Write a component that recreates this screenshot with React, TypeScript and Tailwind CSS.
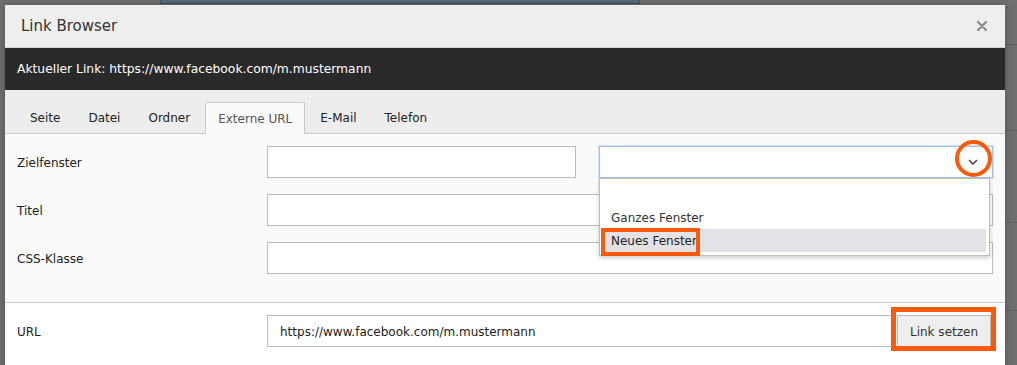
import React from "react";

const TABS = ["Seite", "Datei", "Ordner", "Externe URL", "E-Mail", "Telefon"];
const ACTIVE = "Externe URL";

function Field({ className = "" }: { className?: string }) {
  return <div className={`h-8 border border-[#bbbbbb] bg-white ${className}`} />;
}

function Row({ label, children }: { label: string; children: React.ReactNode }) {
  return (
    <div className="flex items-center">
      <div className="w-[250px] shrink-0 pt-px">{label}</div>
      <div className="flex flex-1 items-center">{children}</div>
    </div>
  );
}

export default function App() {
  return (
    <div className="relative h-[365px] w-[1017px] overflow-hidden bg-[#6f6f6f] font-['DejaVu_Sans',Verdana,sans-serif] text-[12px] text-[#222]">
      {/* page behind the backdrop */}
      <div className="absolute left-[160px] top-0 h-[4px] w-[480px] border-x border-b border-[#3e5266] bg-[#5b6b7b]" />
      <div className="absolute right-0 top-[44px] h-px w-[12px] bg-[#5e5e5e]" />
      <div className="absolute right-0 top-[130px] h-px w-[12px] bg-[#5e5e5e]" />
      <div className="absolute right-0 top-[222px] h-px w-[12px] bg-[#5e5e5e]" />
      <div className="absolute right-0 top-[310px] h-px w-[12px] bg-[#5e5e5e]" />

      {/* modal */}
      <div className="relative ml-[5px] mt-[5px] w-[1000px] bg-[#fafafa] shadow-[0_0_8px_rgba(0,0,0,0.25)]">
        <div className="flex h-[43px] items-center justify-between border-b border-[#d5d5d5] bg-[#eeeeee] pl-4 pr-[18px]">
          <span className="text-[15px] text-[#333]">Link Browser</span>
          <svg width="10" height="10" viewBox="0 0 10 10">
            <path d="M1 1 L9 9 M9 1 L1 9" stroke="#8a8a8a" strokeWidth="2.2" strokeLinecap="round" />
          </svg>
        </div>

        <div className="flex h-[42px] items-center bg-[#292929] px-3 pt-px text-[12.3px] text-white">
          Aktueller Link: https://www.facebook.com/m.mustermann
        </div>

        <div className="flex gap-[2px] border-b border-[#c8c8c8] bg-[#ededed] px-3 pt-3">
          {TABS.map((t) => (
            <div
              key={t}
              className={
                t === ACTIVE
                  ? "-mb-px flex h-[32px] items-center rounded-t-[2px] border border-[#c8c8c8] border-b-[#fafafa] bg-[#fafafa] px-[12px] pt-px text-[#555]"
                  : "flex h-[31px] items-center px-[13px] pt-px text-[#222]"
              }
            >
              {t}
            </div>
          ))}
        </div>

        <div className="flex flex-col gap-4 px-3 pb-7 pt-3">
          <Row label="Zielfenster">
            <Field className="w-[309px]" />
            <div className="ml-[23px] flex h-8 flex-1 items-center justify-end border border-[#9fc5ec] bg-white pr-[14px] shadow-[0_0_0_1px_#cfe3f8]">
              <svg width="10" height="6" viewBox="0 0 10 6">
                <path d="M1 1 L5 5 L9 1" fill="none" stroke="#333" strokeWidth="1.3" />
              </svg>
            </div>
          </Row>
          <Row label="Titel">
            <Field className="flex-1" />
          </Row>
          <Row label="CSS-Klasse">
            <Field className="flex-1" />
          </Row>
        </div>

        <div className="border-t border-[#cccccc] bg-white px-3 pb-6 pt-3">
          <Row label="URL">
            <div className="flex h-8 flex-1 items-center border border-[#bbbbbb] bg-white pl-3 pt-px">
              https://www.facebook.com/m.mustermann
            </div>
            <button className="ml-1 mr-[2px] h-8 w-[94px] border border-[#bbbbbb] bg-[#eeeeee] pt-px text-[#333]">
              Link setzen
            </button>
          </Row>
        </div>
      </div>

      {/* open select list */}
      <div className="absolute left-[599px] top-[178px] flex w-[391px] flex-col border border-[#bdbdbd] bg-white pb-[3px] shadow-[0_2px_4px_rgba(0,0,0,0.2)]">
        <div className="h-[26px]" />
        <div className="mx-[3px] flex h-[24px] items-center pl-2 pt-px text-[#333]">Ganzes Fenster</div>
        <div className="mx-[3px] flex h-[23px] items-center bg-[#e2e2e7] pl-2 text-[#222]">Neues Fenster</div>
      </div>

      {/* annotations */}
      <div className="absolute left-[955px] top-[140px] h-[37px] w-[37px] rounded-full border-4 border-[#fb5a0a]" />
      <div className="absolute left-[601px] top-[228px] h-[28px] w-[99px] border-4 border-[#fb5a0a]" />
      <div className="absolute left-[891px] top-[307px] h-[44px] w-[105px] border-[5px] border-[#fb5a0a]" />
    </div>
  );
}
